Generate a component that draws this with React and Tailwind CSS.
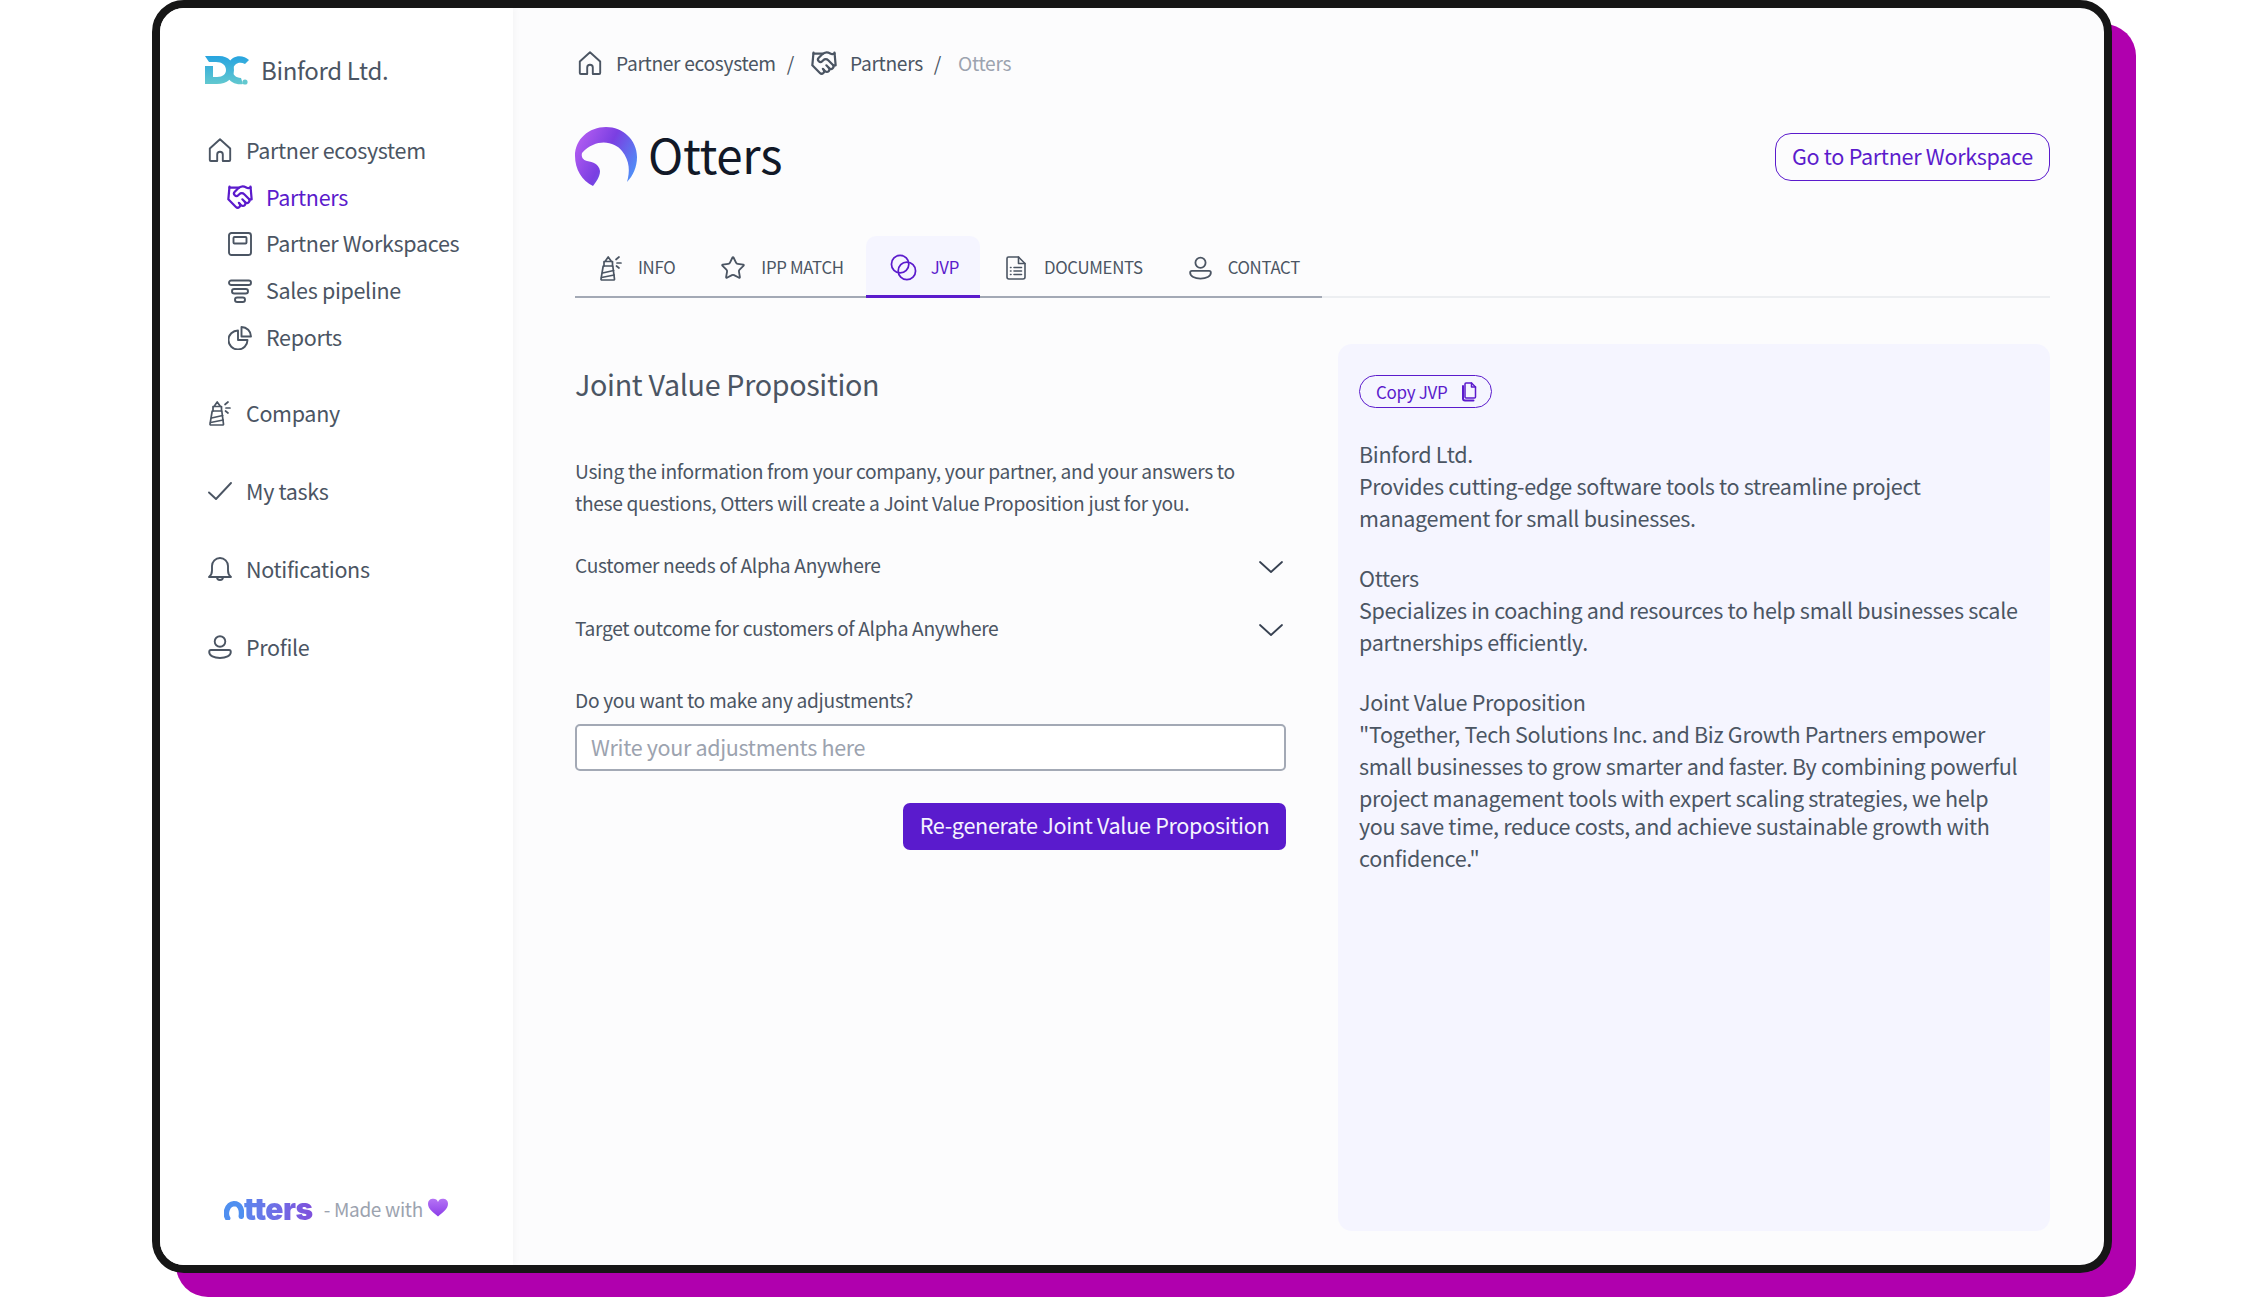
import React from "react";
import { Star, Handshake } from "lucide-react";

const S = ({ className = "", children, vb = "0 0 24 24", sw = 1.9 }) => (
  <svg viewBox={vb} fill="none" stroke="currentColor" strokeWidth={sw} strokeLinecap="round" strokeLinejoin="round" className={`shrink-0 ${className}`}>
    {children}
  </svg>
);

const Home = ({ className }) => (
  <S className={className}><path d="M2.800 23h6.400v-6.500a2.800 2.800 0 0 1 5.600 0V23h6.400a1 1 0 0 0 1-1V10.500L12 1.200 1.800 10.500V22a1 1 0 0 0 1 1z" /></S>
);
const Workspace = ({ className }) => (
  <S className={className}><rect x="1" y="1" width="22" height="22" rx="2.500" /><rect x="5.500" y="5" width="13" height="6.500" rx="1" /></S>
);
const Funnel = ({ className }) => (
  <S className={className}><rect x="1" y="1.500" width="22" height="4.500" rx="2.250" /><rect x="4" y="10" width="16" height="4.500" rx="2.250" /><rect x="7" y="18.500" width="10" height="4.500" rx="2.250" /></S>
);
const Pie = ({ className }) => (
  <S className={className}><path d="M10 4.500a9.500 9.500 0 1 0 9.500 9.500H10z" /><path d="M13.500 1a9.500 9.500 0 0 1 9.500 9.500h-9.500z" /></S>
);
const Lighthouse = ({ className }) => (
  <S className={className} vb="0 0 22 26" sw={1.7}>
    <path d="M1.800 25h11.900a.8.8 0 0 0 .8-.9L12.800 11H3.200L1 24.100a.8.8 0 0 0 .8.900z" />
    <path d="M2.600 18l11-2.500M1.600 22.500l12.600-2.500" />
    <path d="M4 11V6.500h8.500V11M5 6.500L8.200 2l3.300 4.500" />
    <path d="M16 4.500L19 2M17 8h4M16.500 11l2.500 2" />
  </S>
);
const Check = ({ className }) => (
  <S className={className}><path d="M1 13.500l7 6.500L23 4" /></S>
);
const Bell = ({ className }) => (
  <S className={className}><path d="M1 20c2-1.500 3-3.500 3-6.500V9a8 8 0 0 1 16 0v4.500c0 3 1 5 3 6.500z" /><path d="M9 20a3 3 0 0 0 6 0" /></S>
);
const Person = ({ className }) => (
  <S className={className}><circle cx="12" cy="6.500" r="5.300" /><path d="M3 15h18c1.200 0 1.800 1 1.800 2 0 3.800-4.800 6-10.800 6S1.200 20.800 1.200 17c0-1 .6-2 1.800-2z" /></S>
);
const Rings = ({ className }) => (
  <S className={className} sw={1.8} vb="0 0 28 28"><circle cx="10.500" cy="10.500" r="9" /><circle cx="17.500" cy="17.500" r="9" /></S>
);
const Doc = ({ className }) => (
  <S className={className} vb="0 0 20 24" sw={1.6}>
    <path d="M2.500 1h10L19 7.500V21a2 2 0 0 1-2 2H3a2 2 0 0 1-2-2V2.500A1.500 1.500 0 0 1 2.500 1z" />
    <path d="M12.500 1v6.500H19M8 11.500h7.500M8 15h7.500M8 18.500h7.500M4.500 11.500h.5M4.500 15h.5M4.500 18.500h.5" />
  </S>
);
const Copy = ({ className }) => (
  <S className={className} vb="0 0 16 20" sw={1.5}>
    <path d="M5 1h5.500L14.500 5v10a1 1 0 0 1-1 1H5a1 1 0 0 1-1-1V2a1 1 0 0 1 1-1z" />
    <path d="M10.500 1v4h4" />
    <path d="M2 4v12.500A2 2 0 0 0 4 18.500h8.500" strokeWidth="2" />
  </S>
);
const Chevron = () => (
  <svg viewBox="0 0 26 14" fill="none" stroke="currentColor" strokeWidth="1.8" strokeLinecap="round" strokeLinejoin="round" className="w-[26px] h-[14px] text-[#374151]"><path d="M2 2l11 10L24 2" /></svg>
);

const OttersMark = () => (
  <svg viewBox="0 0 62 60" className="w-[62px] h-[60px] shrink-0">
    <defs>
      <linearGradient id="om" x1="0" y1="0.2" x2="1" y2="0.7">
        <stop offset="0" stopColor="#b65ef2" />
        <stop offset="0.5" stopColor="#7a3fe2" />
        <stop offset="1" stopColor="#4f8ff7" />
      </linearGradient>
    </defs>
    <path fill="url(#om)" d="M18 59C7 54 0 42 0 29 0 12 14 0 31 0c17 0 31 13 31 30 0 10-4 19-10 25 3-10 3-21-5-31C40 15 22 10 7 26c-1 4 1 7 5 8 6 1 12 3 13 10 0 6-4 11-7 15z" />
  </svg>
);

const DcMark = () => (
  <svg viewBox="0 0 45 29" className="w-[45px] h-[29px] shrink-0">
    <defs>
      <linearGradient id="dc" x1="0" y1="0" x2="0" y2="1">
        <stop offset="0" stopColor="#27a4e0" />
        <stop offset="1" stopColor="#62c8cf" />
      </linearGradient>
    </defs>
    <path fill="url(#dc)" d="M0 0h14c10 0 15 7 15 14 0 8-7 14-17 14H0V10h8v11h4c6 0 9-3 9-7 0-5-4-8-10-8H4z" />
    <path fill="url(#dc)" d="M44 4C40 0 33-1 28 2c-6 4-8 12-6 18 3 7 10 9 16 8l-2-6c-6 0-9-4-8-9 1-5 6-8 12-5z" />
    <circle cx="40" cy="26" r="2.600" fill="#62c8cf" />
  </svg>
);

const Heart = () => (
  <svg viewBox="0 0 22 20" className="w-[20px] h-[19px] shrink-0 -mt-[4px]">
    <defs>
      <linearGradient id="ht" x1="0" y1="0" x2="0" y2="1">
        <stop offset="0" stopColor="#b573f5" />
        <stop offset="1" stopColor="#8b3de8" />
      </linearGradient>
    </defs>
    <path fill="url(#ht)" d="M11 20C5 15 0 11.500 0 6a5.700 5.700 0 0 1 11-2 5.700 5.700 0 0 1 11 2c0 5.500-5 9-11 14z" />
  </svg>
);

const NavItem = ({ icon: I, label, sub, active, hs, tall }) => (
  <div className={`flex items-center h-[46.800px] text-[21.500px] leading-[32px] ${sub ? "pl-[68px]" : "pl-[48px]"} ${active ? "text-[#5b1bcc]" : "text-[#4b5563]"}`}>
    {hs ? <Handshake strokeWidth={1.9} className="w-[28px] h-[28px] -ml-[2px] -mr-[2px] shrink-0" /> : tall ? <I className="w-[22px] h-[26px] mx-[1px]" /> : <I className="w-[24px] h-[24px]" />}
    <span className="ml-[14px] -mt-[1px]">{label}</span>
  </div>
);

const Tab = ({ icon, label, active }) => (
  <div className={`flex items-center h-[62px] pl-[24px] pt-[4px] text-[16.800px] uppercase rounded-t-[10px] ${active ? "gap-[14px] pr-[21px] bg-[#f5f5ff] text-[#5b1bcc] border-b-[3px] border-[#5b1bcc]" : "gap-[16px] pr-[22px] text-[#4b5563] border-b-2 border-[#a3a9b5]"}`}>
    {icon}
    <span>{label}</span>
  </div>
);

export default function App() {
  return (
    <div className="w-[2264px] h-[1297px] bg-white overflow-hidden tracking-[-0.02em] font-['Noto_Sans_CJK_JP','Noto_Sans',sans-serif]">
      <div className="ml-[152px] w-[1960px] h-[1273px] border-[8px] border-[#161616] rounded-[32px] shadow-[24px_24px_0_0_#b000ae] overflow-hidden flex bg-[#fcfcfd]">
        <aside className="w-[353px] shrink-0 bg-white flex flex-col pt-[46px] pb-[40px] shadow-[2px_0_6px_rgba(0,0,0,0.03)]">
          <div className="flex items-center pl-[45px] h-[32px]">
            <DcMark />
            <span className="ml-[11px] text-[24px] leading-[32px] text-[#4b5563]">Binford Ltd.</span>
          </div>
          <div className="mt-[41px]">
            <NavItem icon={Home} label="Partner ecosystem" />
            <NavItem hs sub active label="Partners" />
            <NavItem icon={Workspace} sub label="Partner Workspaces" />
            <NavItem icon={Funnel} sub label="Sales pipeline" />
            <NavItem icon={Pie} sub label="Reports" />
          </div>
          <div className="mt-[29px] flex flex-col gap-[31.200px]">
            <NavItem icon={Lighthouse} tall label="Company" />
            <NavItem icon={Check} label="My tasks" />
            <NavItem icon={Bell} label="Notifications" />
            <NavItem icon={Person} label="Profile" />
          </div>
          <div className="mt-auto flex items-center pl-[64px] h-[32px]">
            <svg viewBox="0 0 22 22" className="w-[20px] h-[20px] shrink-0 mt-[2px]">
              <path d="M4 20C1 15 3 5 11 4c7 0 9 7 8 14" fill="none" stroke="#4f8ff0" strokeWidth="6" strokeLinecap="round" />
            </svg>
            <span className="font-['Inter',sans-serif] font-black text-[30px] leading-[32px] tracking-[-0.5px] bg-gradient-to-r from-[#5a86ee] to-[#7e4fdc] bg-clip-text text-transparent">tters</span>
            <span className="ml-[11px] text-[19px] leading-[32px] text-[#9ca3af]">- Made with</span>
            <span className="ml-[5px]"><Heart /></span>
          </div>
        </aside>

        <main className="flex-1 min-w-0 pl-[62px] pr-[54px] pt-[39px]">
          <nav className="flex items-center h-[32px] text-[19.200px] leading-[32px] text-[#4b5563]">
            <Home className="w-[24px] h-[24px] ml-[3px] mr-[14px]" />
            <span>Partner ecosystem</span>
            <span className="ml-[11px]">/</span>
            <Handshake strokeWidth={1.9} className="w-[28px] h-[28px] ml-[16px] mr-[12px] shrink-0" />
            <span>Partners</span>
            <span className="ml-[11px]">/</span>
            <span className="ml-[17px] text-[#9ca3af]">Otters</span>
          </nav>

          <div className="mt-[47px] h-[62px] flex items-center justify-between">
            <div className="flex items-center gap-[11px]">
              <OttersMark />
              <h1 className="text-[47.500px] leading-[62px] -mt-[6px] font-normal text-[#111827]">Otters</h1>
            </div>
            <button className="h-[48px] w-[275px] rounded-[16px] border-[1.500px] border-[#5b1bcc] pb-[2px] text-[21.600px] leading-[32px] text-[#5b1bcc] flex items-center justify-center whitespace-nowrap">
              Go to Partner Workspace
            </button>
          </div>

          <div className="mt-[48px] flex border-b-2 border-[#eceef1] h-[62px]">
            <div className="flex h-[62px]">
              <Tab icon={<Lighthouse className="w-[22px] h-[26px] ml-[1px]" />} label="Info" />
              <Tab icon={<Star className="w-[26px] h-[26px] -mx-[1px]" strokeWidth={1.7} />} label="IPP match" />
              <Tab active icon={<Rings className="w-[27px] h-[27px]" />} label="JVP" />
              <Tab icon={<Doc className="w-[20px] h-[24px] mx-[2px]" />} label="Documents" />
              <Tab icon={<Person className="w-[23px] h-[26px]" />} label="Contact" />
            </div>
          </div>

          <div className="mt-[46px] grid grid-cols-[711px_712px] gap-x-[52px] h-[887px]">
            <section className="pt-[20px]">
              <h2 className="text-[28.700px] leading-[40px] font-normal text-[#4b5563]">Joint Value Proposition</h2>
              <p className="mt-[51px] text-[19.200px] leading-[32px] text-[#4b5563]">
                Using the information from your company, your partner, and your answers to<br />
                these questions, Otters will create a Joint Value Proposition just for you.
              </p>
              <div className="mt-[16px]">
                <div className="flex items-center justify-between h-[63px] text-[19.200px] text-[#4b5563] pr-[2px]">
                  <span className="-mt-[2px]">Customer needs of Alpha Anywhere</span>
                  <Chevron />
                </div>
                <div className="flex items-center justify-between h-[63px] text-[19.200px] text-[#4b5563] pr-[2px]">
                  <span className="-mt-[2px]">Target outcome for customers of Alpha Anywhere</span>
                  <Chevron />
                </div>
              </div>
              <label className="block mt-[23px] text-[19.200px] leading-[32px] text-[#4b5563]">Do you want to make any adjustments?</label>
              <input
                readOnly
                placeholder="Write your adjustments here"
                className="block mt-[8px] w-full h-[47px] rounded-[5px] border-2 border-[#a3a9b5] bg-white px-[14px] pb-[2px] text-[21.500px] placeholder:text-[#9ca3af] outline-none"
              />
              <div className="mt-[32px] flex justify-end">
                <button className="h-[47px] w-[383px] rounded-[7px] bg-[#5a1bcd] pb-[3px] text-[21.600px] text-[#f5f3ff] flex items-center justify-center whitespace-nowrap">
                  Re-generate Joint Value Proposition
                </button>
              </div>
            </section>

            <section className="rounded-[14px] bg-[#f5f5ff] pl-[21px] pr-[20px] pt-[31px] text-[21.550px] leading-[32px] text-[#4b5563]">
              <button className="h-[33px] w-[133px] rounded-full border-[1.500px] border-[#5b1bcc] text-[17px] leading-[24px] text-[#5b1bcc] flex items-center pl-[16px] gap-[14px]">
                <span>Copy JVP</span>
                <Copy className="w-[16px] h-[20px]" />
              </button>
              <div className="mt-[30px] flex flex-col gap-[28px]">
                <p>Binford Ltd.<br />Provides cutting-edge software tools to streamline project management for small businesses.</p>
                <p>Otters<br />Specializes in coaching and resources to help small businesses scale partnerships efficiently.</p>
                <div>
                  <p>Joint Value Proposition<br />"Together, Tech Solutions Inc. and Biz Growth Partners empower small businesses to grow smarter and faster. By combining powerful project management tools with expert scaling strategies, we help</p>
                  <p className="-mt-[4px]">you save time, reduce costs, and achieve sustainable growth with confidence."</p>
                </div>
              </div>
            </section>
          </div>
        </main>
      </div>
    </div>
  );
}
